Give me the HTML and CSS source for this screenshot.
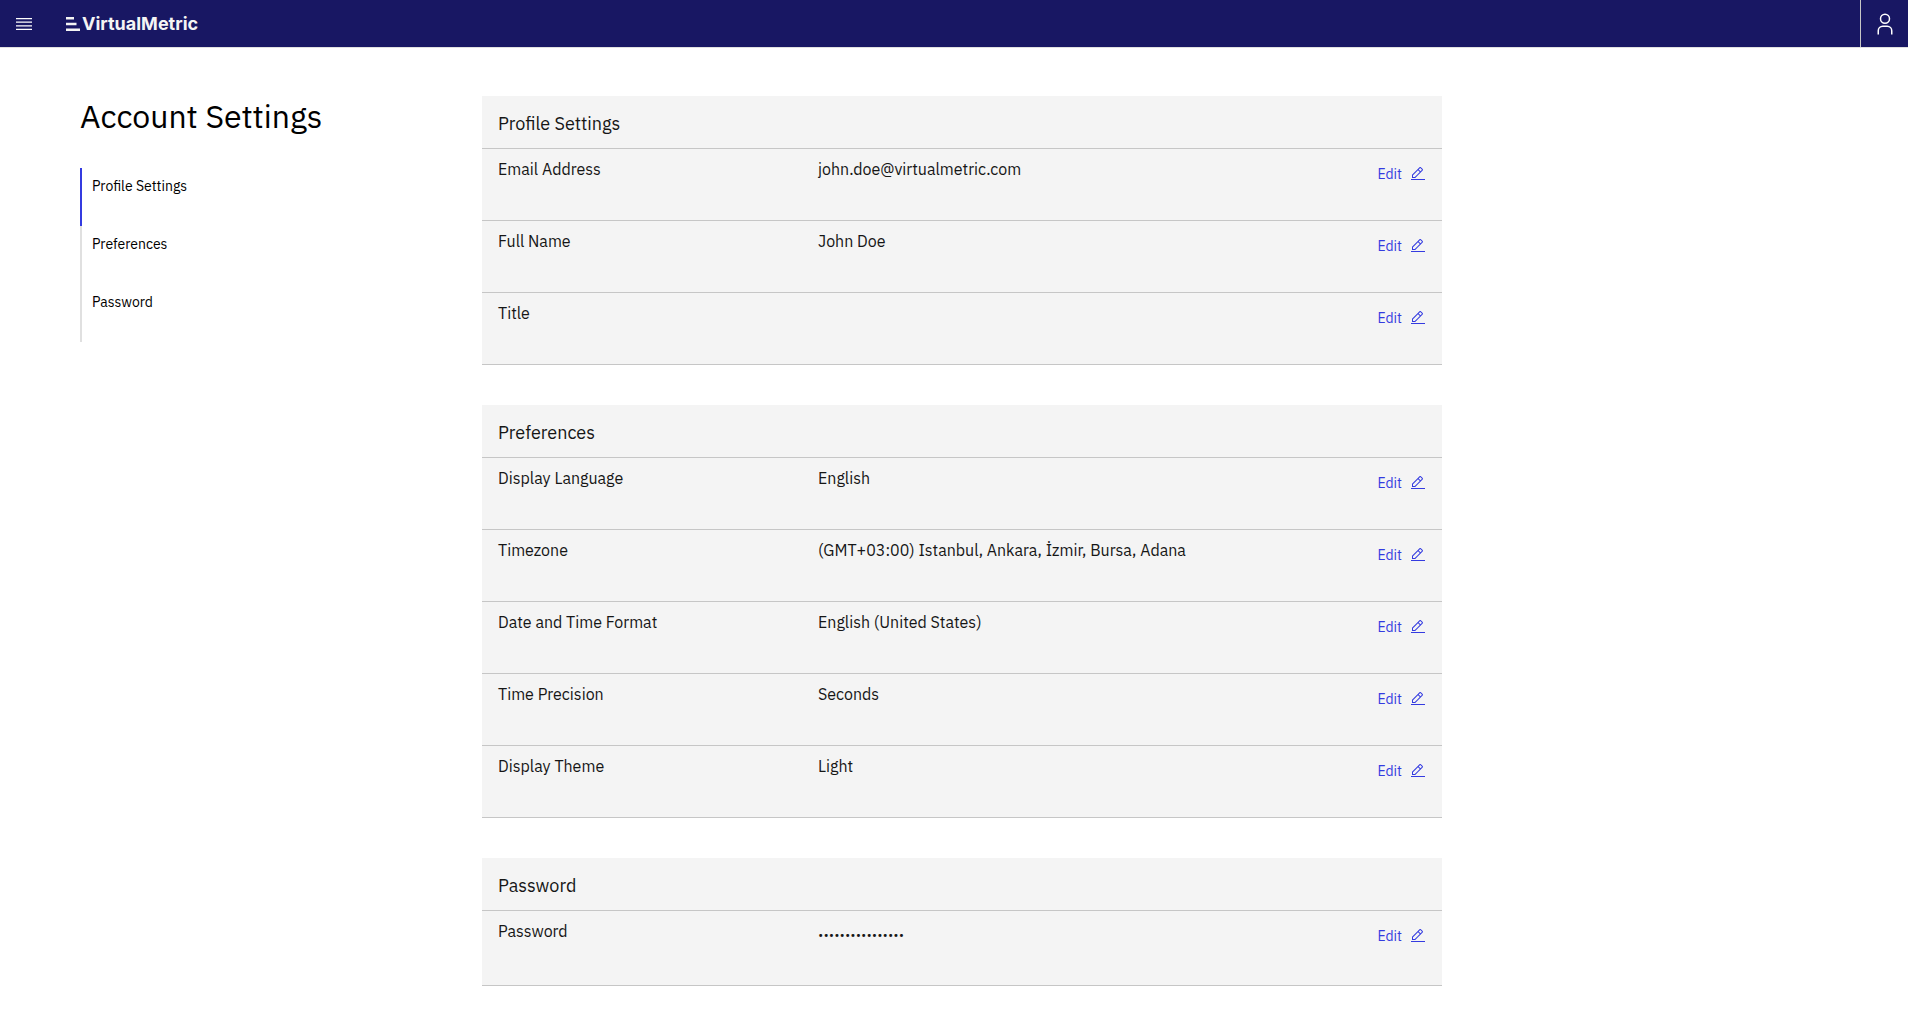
FILE: index.html
```
<!DOCTYPE html>
<html lang="en">
<head>
<meta charset="utf-8">
<title>Account Settings</title>
<link rel="stylesheet" href="styles.css">
</head>
<body>
<svg class="sprite" aria-hidden="true">
  <symbol id="edit" viewBox="0 0 32 32">
    <path d="M2 26H30V28H2zM25.4 9c.8-.8.8-2 0-2.8l-3.6-3.6c-.8-.8-2-.8-2.8 0l-15 15V24h6.4L25.4 9zM20.4 4L24 7.6l-3 3L17.4 7 20.4 4zM6 22v-3.6l10-10 3.6 3.6-10 10H6z"/>
  </symbol>
</svg>
<header class="topbar">
  <button class="icon-button" type="button" aria-label="Open menu">
    <svg width="20" height="20" viewBox="0 0 20 20"><path d="M2 14.8H18V16H2zM2 11.2H18V12.4H2zM2 7.6H18V8.8H2zM2 4H18V5.2H2z"/></svg>
  </button>
  <a class="brand" href="#">
    <svg width="14" height="14" viewBox="0 0 14 14"><path d="M0 0h8v2.5H0zM0 5.7h10.500v2.500H0zM0 11.500h14v2.500H0z"/></svg>
    <span>VirtualMetric</span>
  </a>
  <button class="icon-button user-button" type="button" aria-label="User menu">
    <svg width="24" height="24" viewBox="0 0 32 32"><path d="M16 4a5 5 0 1 1-5 5 5 5 0 0 1 5-5m0-2a7 7 0 1 0 7 7 7 7 0 0 0-7-7zM26 30H24V25a5 5 0 0 0-5-5H13a5 5 0 0 0-5 5v5H6V25a7 7 0 0 1 7-7h6a7 7 0 0 1 7 7z"/></svg>
  </button>
</header>
<div class="page">
  <aside>
    <h1 class="title">Account Settings</h1>
    <nav class="toc">
      <a class="toc-link active" href="#profile">Profile Settings</a>
      <a class="toc-link" href="#preferences">Preferences</a>
      <a class="toc-link" href="#password">Password</a>
    </nav>
  </aside>
  <main class="cards">
    <section class="card" id="profile">
      <h2 class="card-title">Profile Settings</h2>
      <dl class="rows">
        <div class="row"><dt>Email Address</dt><dd>john.doe@virtualmetric.com</dd><dd><button class="edit" type="button">Edit <svg width="16" height="16"><use href="#edit"/></svg></button></dd></div>
        <div class="row"><dt>Full Name</dt><dd>John Doe</dd><dd><button class="edit" type="button">Edit <svg width="16" height="16"><use href="#edit"/></svg></button></dd></div>
        <div class="row"><dt>Title</dt><dd></dd><dd><button class="edit" type="button">Edit <svg width="16" height="16"><use href="#edit"/></svg></button></dd></div>
      </dl>
    </section>
    <section class="card" id="preferences">
      <h2 class="card-title">Preferences</h2>
      <dl class="rows">
        <div class="row"><dt>Display Language</dt><dd>English</dd><dd><button class="edit" type="button">Edit <svg width="16" height="16"><use href="#edit"/></svg></button></dd></div>
        <div class="row"><dt>Timezone</dt><dd>(GMT+03:00) Istanbul, Ankara, İzmir, Bursa, Adana</dd><dd><button class="edit" type="button">Edit <svg width="16" height="16"><use href="#edit"/></svg></button></dd></div>
        <div class="row"><dt>Date and Time Format</dt><dd>English (United States)</dd><dd><button class="edit" type="button">Edit <svg width="16" height="16"><use href="#edit"/></svg></button></dd></div>
        <div class="row"><dt>Time Precision</dt><dd>Seconds</dd><dd><button class="edit" type="button">Edit <svg width="16" height="16"><use href="#edit"/></svg></button></dd></div>
        <div class="row"><dt>Display Theme</dt><dd>Light</dd><dd><button class="edit" type="button">Edit <svg width="16" height="16"><use href="#edit"/></svg></button></dd></div>
      </dl>
    </section>
    <section class="card" id="password">
      <h2 class="card-title">Password</h2>
      <dl class="rows">
        <div class="row row-password"><dt>Password</dt><dd class="dots">................</dd><dd><button class="edit" type="button">Edit <svg width="16" height="16"><use href="#edit"/></svg></button></dd></div>
      </dl>
    </section>
  </main>
</div>
</body>
</html>
```
FILE: styles.css
```
* { box-sizing: border-box; }
body {
  margin: 0;
  background: #fff;
  color: #161616;
  font-family: "IBM Plex Sans", "Noto Sans", sans-serif;
  font-size: 16px;
  line-height: 24px;
}
h1, h2, dl, dd { margin: 0; font-weight: 400; }
svg { fill: currentColor; flex: none; }
.sprite { display: none; }
button {
  border: 0;
  padding: 0;
  background: none;
  color: inherit;
  font: inherit;
  cursor: pointer;
}
a { color: inherit; text-decoration: none; }

.topbar {
  display: flex;
  align-items: stretch;
  height: 48px;
  background: #181763;
  border-bottom: 1px solid #e0e0e0;
  color: #fff;
}
.icon-button {
  display: flex;
  align-items: center;
  justify-content: center;
  width: 48px;
}
.user-button {
  margin-left: auto;
  border-left: 1px solid #c6c6c6;
}
.brand {
  display: flex;
  align-items: center;
  gap: 2px;
  margin-left: 18px;
  color: #f4f4f4;
  font-family: Inter, sans-serif;
  font-size: 18px;
  font-weight: 700;
}

.page {
  display: grid;
  grid-template-columns: 402px minmax(0, 960px);
  padding: 48px 80px 32px;
}
.title {
  font-size: 32px;
  line-height: 40px;
  color: #000;
}
.toc {
  margin-top: 32px;
  font-size: 14px;
  line-height: 18px;
}
.toc-link {
  display: block;
  height: 58px;
  padding: 9px 10px;
  border-left: 2px solid #e0e0e0;
  color: #000;
}
.toc-link.active { border-color: #343be0; }

.cards {
  display: flex;
  flex-direction: column;
  gap: 40px;
}
.card { background: #f4f4f4; }
.card-title {
  padding: 16px 16px 12px;
  border-bottom: 1px solid #c6c6c6;
  font-size: 18px;
}
.row {
  display: grid;
  grid-template-columns: 320px 1fr auto;
  align-items: start;
  min-height: 72px;
  padding: 8px 16px;
  border-bottom: 1px solid #c6c6c6;
}
.row-password { min-height: 75px; }
.edit {
  display: flex;
  align-items: center;
  gap: 8px;
  padding: 8px 0;
  color: #343be0;
  font-size: 14px;
  line-height: 18px;
}
.dots {
  font-size: 18px;
  font-weight: 600;
}
```
